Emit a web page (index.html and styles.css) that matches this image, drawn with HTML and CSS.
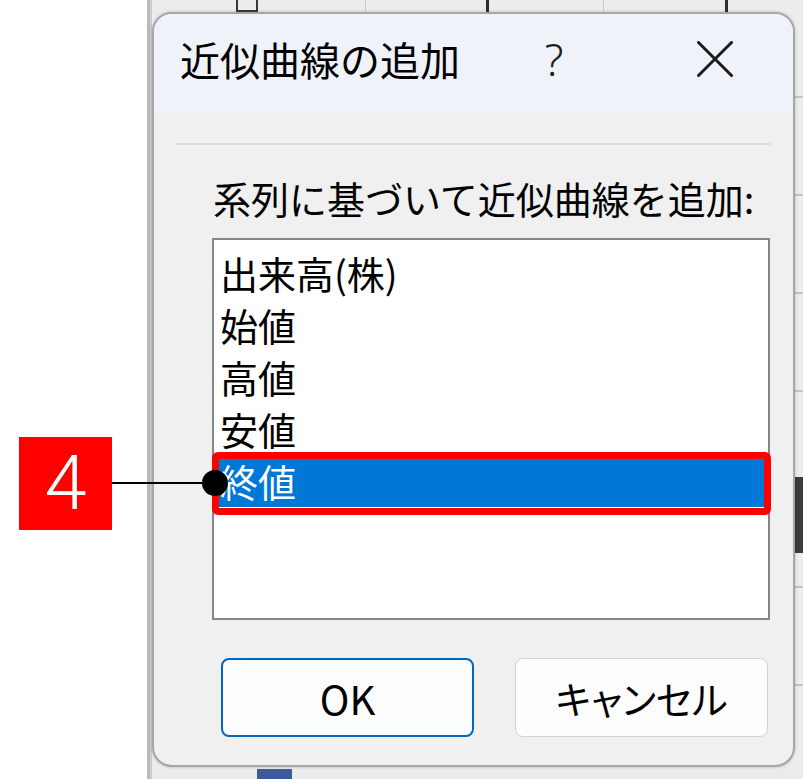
FILE: index.html
```html
<!DOCTYPE html>
<html lang="ja">
<head>
<meta charset="utf-8">
<title>近似曲線の追加</title>
<link rel="stylesheet" href="styles.css">
</head>
<body>
<div class="stage">
  <div class="blank"></div>
  <div class="sheet">
    <span class="mark mark-a"></span>
    <span class="mark mark-b"></span>
    <span class="mark mark-c"></span>
    <span class="mark mark-d"></span>
    <span class="mark mark-e"></span>
    <span class="mark mark-bar"></span>
    <span class="mark mark-blue"></span>
    <div class="dialog">
      <div class="titlebar">
        <span class="title">近似曲線の追加</span>
        <span class="help">?</span>
        <svg class="close" width="36" height="36" viewBox="0 0 36 36" aria-label="閉じる">
          <path d="M1.5 1.5 L34.5 34.5 M34.5 1.5 L1.5 34.5" stroke="#1c1c1c" stroke-width="3" stroke-linecap="round" fill="none"/>
        </svg>
      </div>
      <div class="body">
        <div class="separator"></div>
        <div class="label">系列に基づいて近似曲線を追加:</div>
        <ul class="listbox">
          <li class="item">出来高(株)</li>
          <li class="item">始値</li>
          <li class="item">高値</li>
          <li class="item">安値</li>
          <li class="item selected">終値</li>
        </ul>
        <div class="buttons">
          <button class="btn btn-ok">OK</button>
          <button class="btn">キャンセル</button>
        </div>
      </div>
    </div>
  </div>
  <div class="callout-box">4</div>
  <div class="highlight"></div>
  <div class="callout-line"></div>
  <div class="callout-dot"></div>
</div>
</body>
</html>
```

FILE: styles.css
```css
* { box-sizing: border-box; }
html, body { margin: 0; padding: 0; background: #ffffff; }
body { font-family: "Noto Sans CJK JP", "Noto Sans", sans-serif; color: #000; }

.stage {
  position: relative;
  width: 803px;
  height: 779px;
  overflow: hidden;
  display: flex;
}
.blank { width: 147px; flex: none; background: #ffffff; }
.sheet {
  position: relative;
  flex: 1;
  padding: 12px 8px 12px 5px;
  background-color: #ececec;
  background-image:
    linear-gradient(to right, #b9b9b9 0, #b9b9b9 3px, #cdcdcd 3px, #cdcdcd 5px, transparent 5px),
    repeating-linear-gradient(to bottom, transparent 0, transparent 96px, #c4c4c4 96px, #c4c4c4 98px);
}
.mark { position: absolute; display: block; }
.mark-a { left: 89px; top: 0; width: 22px; height: 12px; border: 2px solid #3a3a3a; border-top: none; }
.mark-b { left: 218px; top: 0; width: 1px; height: 12px; background: #c6c6c6; }
.mark-c { left: 339px; top: 0; width: 3px; height: 12px; background: #2e2e2e; }
.mark-d { left: 456px; top: 0; width: 1px; height: 12px; background: #c6c6c6; }
.mark-e { left: 578px; top: 0; width: 3px; height: 12px; background: #2e2e2e; }
.mark-bar { left: 648px; top: 477px; width: 8px; height: 76px; background: #3c3c3c; }
.mark-blue { left: 110px; top: 769px; width: 35px; height: 10px; background: #3d5a9c; }

.dialog {
  position: relative;
  width: 643px;
  height: 755px;
  border: 2px solid #a7a7a7;
  border-radius: 20px;
  background: #f0f0f0;
  box-shadow: 0 0 3px rgba(0,0,0,0.25);
  overflow: hidden;
  display: flex;
  flex-direction: column;
}
.titlebar {
  height: 98px;
  flex: none;
  background: #eff3f9;
  display: flex;
  align-items: center;
  padding: 0 60px 8px 26px;
}
.title { flex: 1; font-size: 40px; line-height: 40px; }
.help {
  width: 40px;
  text-align: center;
  font-family: "Noto Sans", "Noto Sans CJK JP", sans-serif;
  font-weight: 300;
  font-size: 44px;
  line-height: 40px;
  margin-right: 123px;
  color: #1c1c1c;
}
.close { display: block; flex: none; }

.body { display: flex; flex-direction: column; padding: 31px 23px 28px 23px; }
.separator { height: 2px; background: #d9d9d9; }
.label { margin: 29px 0 16px 36px; font-size: 38px; line-height: 48px; white-space: nowrap; }
.listbox {
  list-style: none;
  margin: 0 0 0 35px;
  padding: 7px 0 0 0;
  width: 558px;
  height: 382px;
  border: 2px solid #858585;
  background: #ffffff;
}
.item { height: 52px; line-height: 52px; font-size: 38px; padding-left: 6px; white-space: nowrap; }
.item.selected { background: #0078d7; color: #ffffff; }

.buttons { display: flex; gap: 41px; margin: 38px 0 0 44px; }
.btn {
  width: 253px;
  height: 79px;
  font-family: "Noto Sans CJK JP", "Noto Sans", sans-serif;
  font-size: 38px;
  color: #000;
  background: #fdfdfd;
  border: 1.5px solid #d2d2d2;
  border-radius: 8px;
  padding: 0;
  font-feature-settings: "palt";
}
.btn-ok { border: 2px solid #0067c0; font-size: 40px; }

.callout-box {
  position: absolute;
  left: 19px;
  top: 437px;
  width: 93px;
  height: 93px;
  background: #ff0000;
  color: #ffffff;
  font-family: Roboto, "Noto Sans", sans-serif;
  font-weight: 300;
  font-size: 76px;
  line-height: 93px;
  text-align: center;
}
.highlight {
  position: absolute;
  left: 212px;
  top: 452px;
  width: 559px;
  height: 63px;
  border: 7px solid #ff0000;
  border-radius: 6px;
}
.callout-line { position: absolute; left: 112px; top: 482px; width: 96px; height: 2px; background: #000; }
.callout-dot { position: absolute; left: 202px; top: 470px; width: 26px; height: 26px; border-radius: 50%; background: #000; }
```
